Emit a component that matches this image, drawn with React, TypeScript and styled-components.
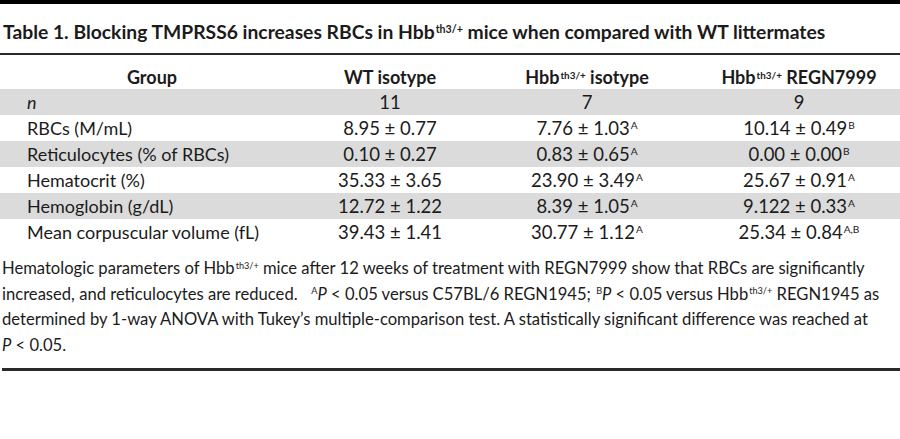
import React from "react";
import styled, { createGlobalStyle } from "styled-components";

const Global = createGlobalStyle`
  html, body { margin: 0; padding: 0; background: #fff; }
  body { font-family: Lato, "Liberation Sans", sans-serif; color: #1b1b1b; }
`;

const Page = styled.div`
  width: 900px;
  height: 439px;
  display: flex;
  flex-direction: column;
  background: #fff;
`;

const TopBar = styled.div`
  height: 4px;
  background: #000;
`;

const Title = styled.h1`
  margin: 0;
  padding: 16px 0 0 3px;
  height: 33px;
  font-size: 19.3px;
  font-weight: 700;
  line-height: 24px;
  border-bottom: 2px solid #2a2a2a;
  white-space: nowrap;
`;

const Sup = styled.span`
  font-size: 0.55em;
  vertical-align: 0.55em;
  line-height: 0;
  margin-left: 1px;
`;

const Table = styled.div`
  display: flex;
  flex-direction: column;
`;

const Row = styled.div<{ $shade?: boolean; $head?: boolean }>`
  display: grid;
  grid-template-columns: 304px 172px 222px 1fr;
  height: ${(p) => (p.$head ? 34 : 26)}px;
  align-items: ${(p) => (p.$head ? "end" : "center")};
  box-sizing: border-box;
  background: ${(p) => (p.$shade ? "#dbdbdb" : "transparent")};
  font-size: ${(p) => (p.$head ? 18 : 18.5)}px;
  font-weight: ${(p) => (p.$head ? 700 : 400)};
  line-height: 24px;
`;

const Label = styled.div<{ $center?: boolean; $italic?: boolean }>`
  padding-left: ${(p) => (p.$center ? 0 : 27)}px;
  text-align: ${(p) => (p.$center ? "center" : "left")};
  font-style: ${(p) => (p.$italic ? "italic" : "normal")};
  font-size: ${(p) => (p.$center ? "inherit" : "18px")};
  white-space: nowrap;
`;

const Cell = styled.div`
  text-align: center;
  white-space: nowrap;
`;

const Note = styled.p`
  margin: 11px 0 0 2px;
  font-size: 16.6px;
  line-height: 25.5px;
  padding-bottom: 10px;
  border-bottom: 3px solid #2a2a2a;
  white-space: nowrap;
`;

const I = styled.i`
  font-style: italic;
`;

const Hbb = () => (
  <>
    Hbb<Sup>th3/+</Sup>
  </>
);

type R = { label: React.ReactNode; italic?: boolean; v: [string, string?][] };

const rows: R[] = [
  { label: "n", italic: true, v: [["11"], ["7"], ["9"]] },
  { label: "RBCs (M/mL)", v: [["8.95 ± 0.77"], ["7.76 ± 1.03", "A"], ["10.14 ± 0.49", "B"]] },
  { label: "Reticulocytes (% of RBCs)", v: [["0.10 ± 0.27"], ["0.83 ± 0.65", "A"], ["0.00 ± 0.00", "B"]] },
  { label: "Hematocrit (%)", v: [["35.33 ± 3.65"], ["23.90 ± 3.49", "A"], ["25.67 ± 0.91", "A"]] },
  { label: "Hemoglobin (g/dL)", v: [["12.72 ± 1.22"], ["8.39 ± 1.05", "A"], ["9.122 ± 0.33", "A"]] },
  { label: "Mean corpuscular volume (fL)", v: [["39.43 ± 1.41"], ["30.77 ± 1.12", "A"], ["25.34 ± 0.84", "A,B"]] },
];

export default function App() {
  return (
    <Page>
      <Global />
      <TopBar />
      <Title>
        Table 1. Blocking TMPRSS6 increases RBCs in <Hbb /> mice when compared with WT littermates
      </Title>
      <Table>
        <Row $head>
          <Label $center>Group</Label>
          <Cell>WT isotype</Cell>
          <Cell>
            <Hbb /> isotype
          </Cell>
          <Cell>
            <Hbb /> REGN7999
          </Cell>
        </Row>
        {rows.map((r, i) => (
          <Row key={i} $shade={i % 2 === 0}>
            <Label $italic={r.italic}>{r.label}</Label>
            {r.v.map(([val, sup], j) => (
              <Cell key={j}>
                {val}
                {sup && <Sup>{sup}</Sup>}
              </Cell>
            ))}
          </Row>
        ))}
      </Table>
      <Note>
        Hematologic parameters of <Hbb /> mice after 12 weeks of treatment with REGN7999 show that RBCs are significantly
        <br />
        increased, and reticulocytes are reduced.&nbsp;&nbsp; <Sup>A</Sup>
        <I>P</I> &lt; 0.05 versus C57BL/6 REGN1945; <Sup>B</Sup>
        <I>P</I> &lt; 0.05 versus <Hbb /> REGN1945 as
        <br />
        determined by 1-way ANOVA with Tukey’s multiple-comparison test. A statistically significant difference was reached at
        <br />
        <I>P</I> &lt; 0.05.
      </Note>
    </Page>
  );
}
